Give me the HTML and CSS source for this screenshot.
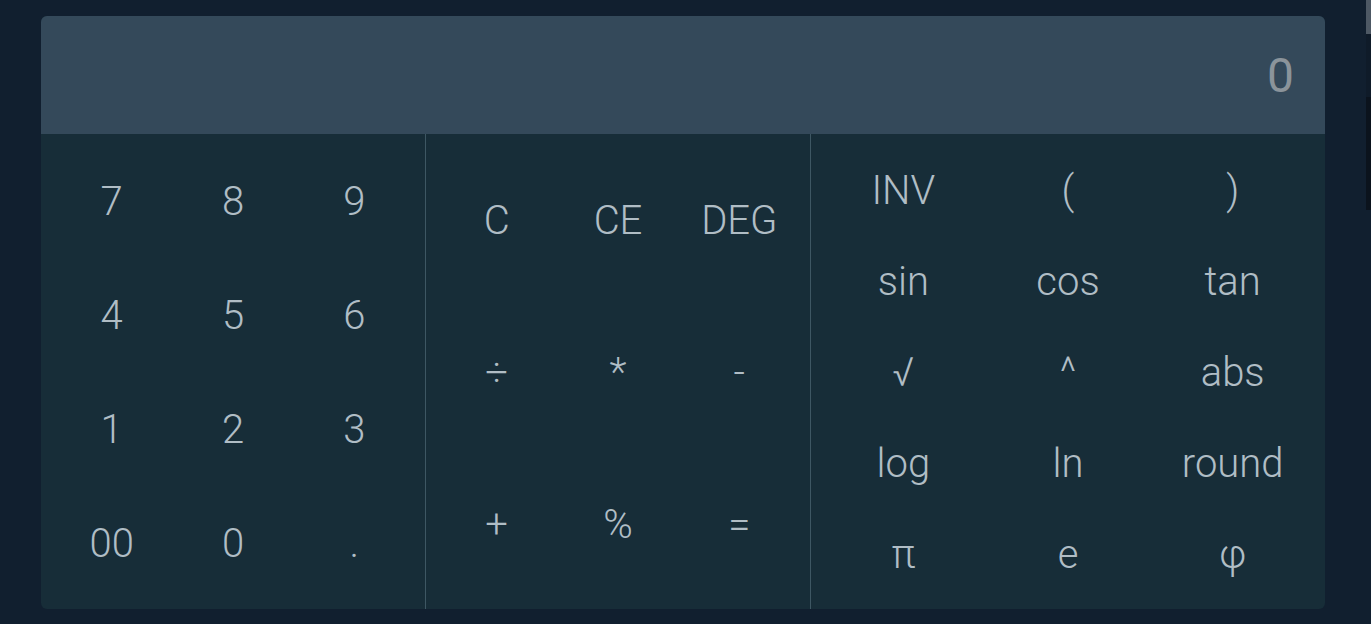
FILE: index.html
```html
<!DOCTYPE html>
<html lang="en">
<head>
<meta charset="utf-8">
<title>Calculator</title>
<link rel="stylesheet" href="styles.css">
</head>
<body>
<div class="edge"><span class="edge-thumb"></span><span class="edge-mid"></span><span class="edge-dark"></span></div>
<main class="calc">
  <div class="display">0</div>
  <div class="keys">
    <section class="pad pad-num">
      <button class="key">7</button><button class="key">8</button><button class="key">9</button>
      <button class="key">4</button><button class="key">5</button><button class="key">6</button>
      <button class="key">1</button><button class="key">2</button><button class="key">3</button>
      <button class="key">00</button><button class="key">0</button><button class="key">.</button>
    </section>
    <section class="pad pad-ops">
      <button class="key">C</button><button class="key">CE</button><button class="key">DEG</button>
      <button class="key">÷</button><button class="key">*</button><button class="key">-</button>
      <button class="key">+</button><button class="key">%</button><button class="key">=</button>
    </section>
    <section class="pad pad-fn">
      <button class="key">INV</button><button class="key">(</button><button class="key">)</button>
      <button class="key">sin</button><button class="key">cos</button><button class="key">tan</button>
      <button class="key">√</button><button class="key">^</button><button class="key">abs</button>
      <button class="key">log</button><button class="key">ln</button><button class="key">round</button>
      <button class="key">π</button><button class="key">e</button><button class="key">φ</button>
    </section>
  </div>
</main>
</body>
</html>
```

FILE: styles.css
```css
html, body {
  margin: 0;
  padding: 0;
}
body {
  background: #111f2f;
  font-family: Roboto, "Liberation Sans", sans-serif;
  font-weight: 300;
  height: 624px;
  box-sizing: border-box;
  padding: 16px 46px 15px 41px;
  position: relative;
  overflow: hidden;
}
.edge {
  position: absolute;
  top: 0;
  right: 0;
  width: 5px;
  display: flex;
  flex-direction: column;
}
.edge-thumb { height: 34px; background: #4d5864; }
.edge-mid { height: 63px; background: #0f1b29; }
.edge-dark { height: 113px; background: #0b131d; }
.calc {
  height: 593px;
  border-radius: 6px;
  overflow: hidden;
  display: flex;
  flex-direction: column;
  background: #172d38;
}
.display {
  height: 118px;
  flex: none;
  background: #34495a;
  color: #8b949b;
  font-size: 48px;
  font-weight: 400;
  display: flex;
  align-items: center;
  justify-content: flex-end;
  padding: 0 31px 0 0;
  box-sizing: border-box;
}
.keys {
  flex: 1;
  display: grid;
  grid-template-columns: 384px 385px 515px;
}
.pad {
  display: grid;
  grid-template-columns: repeat(3, 1fr);
  padding: 11px 10px 9px;
}
.pad + .pad {
  border-left: 1px solid #3e5763;
}
.pad-num { grid-template-rows: repeat(4, 1fr); }
.pad-ops { grid-template-rows: repeat(3, 1fr); }
.pad-fn { grid-template-rows: repeat(5, 1fr); }
.key {
  background: none;
  border: 0;
  padding: 0;
  margin: 0;
  color: #b0bdc5;
  font-family: inherit;
  font-weight: 300;
  font-size: 40px;
  display: flex;
  align-items: center;
  justify-content: center;
  cursor: pointer;
}
```
